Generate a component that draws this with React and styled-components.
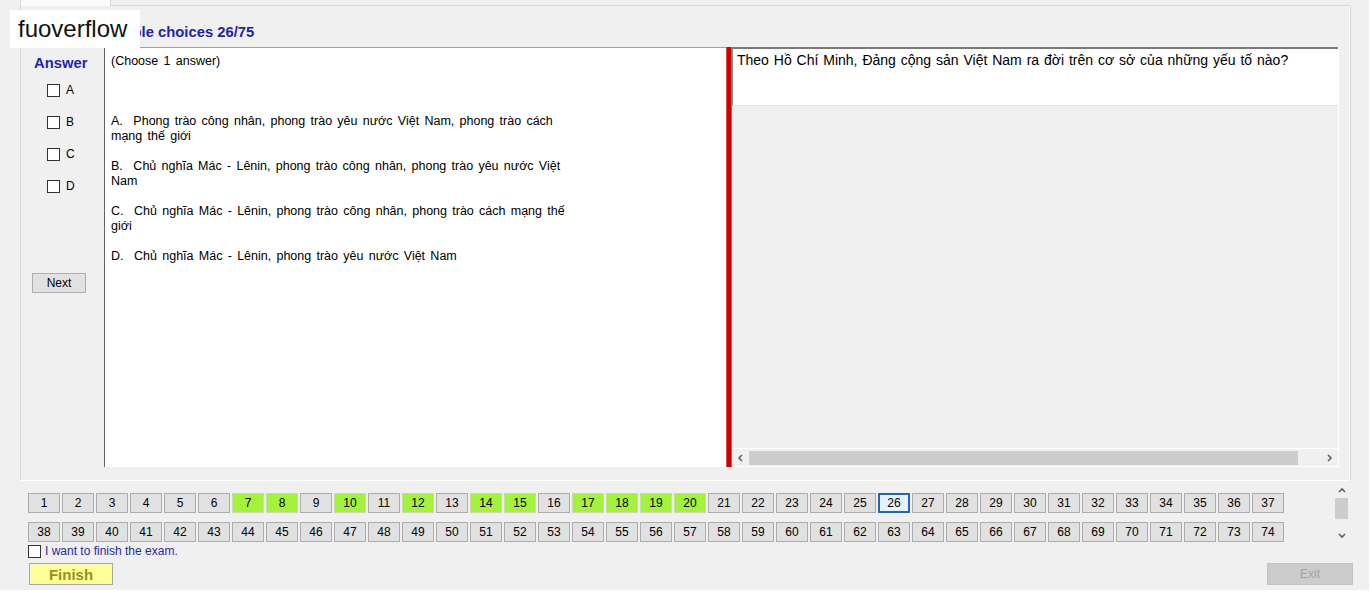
import React from 'react';
import styled, { createGlobalStyle } from 'styled-components';

const GlobalStyle = createGlobalStyle`
  * { box-sizing: border-box; }
  html, body { margin: 0; padding: 0; background: #ffffff; }
  body {
    font-family: "Liberation Sans", Arial, sans-serif;
    font-size: 12px;
    color: #000;
  }
`;

const BLUE = '#1f25a6';

const Form = styled.div`
  position: relative;
  width: 1369px;
  height: 590px;
  background: #f0f0f0;
  overflow: hidden;
`;

const Watermark = styled.div`
  position: absolute;
  left: 10px;
  top: 10px;
  width: 130px;
  height: 38px;
  padding-left: 8px;
  background: #ffffff;
  font-size: 24px;
  line-height: 38px;
  color: #111;
`;

const TabControl = styled.div`
  margin-left: 20px;
  width: 1331px;
  display: flex;
  flex-direction: column;
`;

const TabStrip = styled.div`
  height: 6px;
  display: flex;
`;

const Tab = styled.div`
  width: 91px;
  height: 6px;
  background: #fbfbfb;
  border-left: 1px solid #d6d6d6;
  border-right: 1px solid #d6d6d6;
`;

const StripRest = styled.div`
  flex: 1;
  border-bottom: 1px solid #d9d9d9;
`;

const TabPage = styled.div`
  height: 475px;
  border-left: 1px solid #d9d9d9;
  border-right: 1px solid #d9d9d9;
  border-bottom: 1px solid #ffffff;
  box-shadow: inset -1px 0 0 #ffffff;
  display: flex;
  flex-direction: column;
`;

const TitleRow = styled.div`
  height: 41px;
  padding: 18px 0 0 77px;
  line-height: 16px;
  font-size: 14.8px;
  font-weight: bold;
  color: ${BLUE};
`;

const ContentRow = styled.div`
  display: flex;
  height: 420px;
`;

const AnswerColumn = styled.div`
  width: 83px;
  padding: 8px 0 0 13px;
  display: flex;
  flex-direction: column;
`;

const AnswerHeading = styled.div`
  line-height: 16px;
  font-size: 14.8px;
  font-weight: bold;
  color: ${BLUE};
`;

const OptionList = styled.div`
  margin-top: 3px;
  display: flex;
  flex-direction: column;
`;

const OptionRow = styled.div`
  height: 32px;
  display: flex;
  align-items: center;
  padding-left: 13px;
`;

const CheckBox = styled.span`
  display: inline-block;
  width: 13px;
  height: 13px;
  border: 1px solid #333333;
  background: #ffffff;
  flex: none;
`;

const OptionLabel = styled.span`
  margin-left: 6px;
  font-size: 12px;
  line-height: 14px;
`;

const PlainButton = styled.div`
  display: flex;
  align-items: center;
  justify-content: center;
  background: #e1e1e1;
  border: 1px solid #adadad;
  font-size: 12px;
  color: #000;
`;

const NextButton = styled(PlainButton)`
  margin: 71px 0 0 -2px;
  width: 54px;
  height: 20px;
`;

const ChoicesBox = styled.div`
  width: 622px;
  height: 420px;
  background: #ffffff;
  border-top: 1px solid #a0a0a0;
  border-left: 1px solid #646464;
  padding: 6px 6px;
  font-size: 12.5px;
  word-spacing: 1.8px;
  line-height: 15px;
`;

const Hint = styled.div`
  white-space: pre;
`;

const ChoiceList = styled.div`
  margin-top: 45px;
  display: flex;
  flex-direction: column;
  gap: 15px;
`;

const Choice = styled.div`
  white-space: pre;
`;

const Splitter = styled.div`
  width: 6px;
  height: 420px;
  background: #d10000;
  box-shadow: inset 1px 0 0 #e05050, inset -1px 0 0 #e05050;
`;

const RightPanel = styled.div`
  width: 607px;
  height: 420px;
  display: flex;
  flex-direction: column;
  border-right: 1px solid #ffffff;
  border-bottom: 1px solid #ffffff;
`;

const QuestionBox = styled.div`
  height: 59px;
  background: #ffffff;
  border-top: 2px solid #7a7a7a;
  border-left: 1px solid #8c8c8c;
  border-bottom: 1px solid #e3e3e3;
  padding: 3px 4px;
  font-size: 14px;
  word-spacing: 1px;
  line-height: 16px;
`;

const PanelFill = styled.div`
  flex: 1;
`;

const HScroll = styled.div`
  height: 18px;
  display: flex;
  align-items: center;
  border-top: 1px solid #ffffff;
  background: #f0f0f0;
`;

const ArrowCell = styled.div`
  width: ${p => p.$w || 17}px;
  height: ${p => p.$h || 17}px;
  display: flex;
  align-items: center;
  justify-content: center;
  flex: none;
`;

const HThumb = styled.div`
  width: 549px;
  height: 14px;
  background: #cdcdcd;
  flex: none;
`;

const Fill = styled.div`
  flex: 1;
`;

const BottomArea = styled.div`
  margin-top: 2px;
  padding-left: 28px;
  display: flex;
  flex-direction: column;
`;

const GridSection = styled.div`
  display: flex;
  height: 60px;
`;

const NumberGrid = styled.div`
  width: 1306px;
  height: 60px;
  padding-top: 10px;
  display: grid;
  grid-template-columns: repeat(37, 32px);
  grid-auto-rows: 20px;
  column-gap: 2px;
  row-gap: 9px;
  overflow: hidden;
`;

const NumberButton = styled.div`
  display: flex;
  align-items: center;
  justify-content: center;
  font-size: 12px;
  background: ${p => (p.$current ? '#e5f1fb' : p.$done ? '#a4f23e' : '#e1e1e1')};
  border: ${p => (p.$current ? '2px solid #2366ad' : p.$done ? '1px solid #c9d9b0' : '1px solid #adadad')};
`;

const VScroll = styled.div`
  width: 15px;
  height: 60px;
  display: flex;
  flex-direction: column;
  align-items: center;
`;

const VThumb = styled.div`
  width: 13px;
  height: 21px;
  background: #cdcdcd;
`;

const FinishCheckRow = styled.div`
  margin-top: 1px;
  height: 14px;
  display: flex;
  align-items: center;
`;

const FinishLabel = styled.span`
  margin-left: 4px;
  font-size: 12px;
  line-height: 14px;
  color: #2a2aa4;
`;

const ActionRow = styled.div`
  margin-top: 5px;
  width: 1325px;
  display: flex;
  justify-content: space-between;
`;

const FinishButton = styled.div`
  margin-left: 1px;
  width: 84px;
  height: 22px;
  display: flex;
  align-items: center;
  justify-content: center;
  background: #ffff99;
  border: 1px solid #a8a8a8;
  box-shadow: inset 0 0 0 1px #f6f6c8;
  font-size: 15px;
  font-weight: bold;
  color: #94941a;
`;

const ExitButton = styled.div`
  width: 86px;
  height: 22px;
  display: flex;
  align-items: center;
  justify-content: center;
  background: #cccccc;
  border: 1px solid #c2c2c2;
  font-size: 12px;
  color: #a3a3a3;
`;

const Chevron = ({ dir }) => {
  const pts = {
    left: '5,1 2,4 5,7',
    right: '2,1 5,4 2,7',
    up: '1,5 4,2 7,5',
    down: '1,2 4,5 7,2',
  }[dir];
  return (
    <svg width="8" height="8" viewBox="0 0 8 8">
      <polyline points={pts} fill="none" stroke="#606060" strokeWidth="1.6" />
    </svg>
  );
};

const doneSet = new Set([7, 8, 10, 12, 14, 15, 17, 18, 19, 20]);
const CURRENT = 26;

const choices = [
  'A.  Phong trào công nhân, phong trào yêu nước Việt Nam, phong trào cách\nmạng thế giới',
  'B.  Chủ nghĩa Mác - Lênin, phong trào công nhân, phong trào yêu nước Việt\nNam',
  'C.  Chủ nghĩa Mác - Lênin, phong trào công nhân, phong trào cách mạng thế\ngiới',
  'D.  Chủ nghĩa Mác - Lênin, phong trào yêu nước Việt Nam',
];

export default function App() {
  const numbers = Array.from({ length: 75 }, (_, i) => i + 1);
  return (
    <>
      <GlobalStyle />
      <Form>
        <TabControl>
          <TabStrip>
            <Tab />
            <StripRest />
          </TabStrip>
          <TabPage>
            <TitleRow>Multiple choices 26/75</TitleRow>
            <ContentRow>
              <AnswerColumn>
                <AnswerHeading>Answer</AnswerHeading>
                <OptionList>
                  {['A', 'B', 'C', 'D'].map(l => (
                    <OptionRow key={l}>
                      <CheckBox />
                      <OptionLabel>{l}</OptionLabel>
                    </OptionRow>
                  ))}
                </OptionList>
                <NextButton>Next</NextButton>
              </AnswerColumn>
              <ChoicesBox>
                <Hint>(Choose 1 answer)</Hint>
                <ChoiceList>
                  {choices.map(c => (
                    <Choice key={c}>{c}</Choice>
                  ))}
                </ChoiceList>
              </ChoicesBox>
              <Splitter />
              <RightPanel>
                <QuestionBox>
                  Theo Hồ Chí Minh, Đảng cộng sản Việt Nam ra đời trên cơ sở của những yếu tố nào?
                </QuestionBox>
                <PanelFill />
                <HScroll>
                  <ArrowCell $w={17}>
                    <Chevron dir="left" />
                  </ArrowCell>
                  <HThumb />
                  <Fill />
                  <ArrowCell $w={17}>
                    <Chevron dir="right" />
                  </ArrowCell>
                </HScroll>
              </RightPanel>
            </ContentRow>
          </TabPage>
        </TabControl>
        <BottomArea>
          <GridSection>
            <NumberGrid>
              {numbers.map(n => (
                <NumberButton key={n} $done={doneSet.has(n)} $current={n === CURRENT}>
                  {n}
                </NumberButton>
              ))}
            </NumberGrid>
            <VScroll>
              <ArrowCell $w={15} $h={15}>
                <Chevron dir="up" />
              </ArrowCell>
              <VThumb />
              <Fill />
              <ArrowCell $w={15} $h={15}>
                <Chevron dir="down" />
              </ArrowCell>
            </VScroll>
          </GridSection>
          <FinishCheckRow>
            <CheckBox />
            <FinishLabel>I want to finish the exam.</FinishLabel>
          </FinishCheckRow>
          <ActionRow>
            <FinishButton>Finish</FinishButton>
            <ExitButton>Exit</ExitButton>
          </ActionRow>
        </BottomArea>
        <Watermark>fuoverflow</Watermark>
      </Form>
    </>
  );
}
